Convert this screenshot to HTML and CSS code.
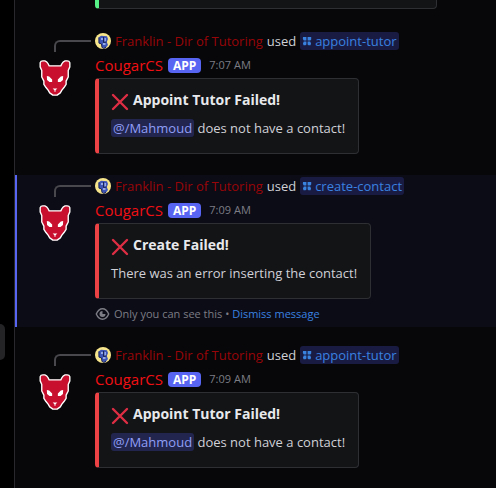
FILE: index.html
```
<!DOCTYPE html>
<html lang="en">
<head>
<meta charset="utf-8">
<title>CougarCS chat</title>
<link rel="stylesheet" href="styles.css">
</head>
<body>
<svg class="defs" aria-hidden="true">
  <symbol id="cougar" viewBox="0 0 30 34">
    <path d="M1 2.500Q1.500 .8 3.500 .8H5.500Q7.500 1.500 8.500 3.500L9.500 5.500H20.500L21.500 3.500Q22.500 1.500 24.500 .8H26.500Q28.500 .8 29 2.500V6.500L27.500 10V16L25.500 20V23L23.500 26L21.500 28.500L20 31L17 33.200H13L10 31L8.500 28.500L6.500 26L4.500 23V20L2.500 16V10L1 6.500Z" fill="#c8102e" stroke="#fff" stroke-width="1.300" stroke-linejoin="round"/>
    <path d="M7.300 15L9.500 15.500L12.300 18.500V20.800H9.800L7.500 18.800ZM22.700 15L20.500 15.500L17.700 18.500V20.800H20.200L22.500 18.800ZM12.800 27H17.200L15.500 28.500V30H14.500V28.500Z" fill="#fff"/>
  </symbol>
  <symbol id="user" viewBox="0 0 16 16">
    <circle cx="8" cy="8" r="8" fill="#f7e58c"/>
    <path d="M3.500 4.500L6 2.800L12 3.300L13 6L11.800 9L13 12L10.500 15.300L7 14.500L6.500 11L3.800 10.500Z" fill="#3e55b8"/>
    <path d="M6 5H8V7H6ZM9.500 5H11V8.500H9.500ZM8 10H10.500V12H8Z" fill="#93a8e6"/>
    <path d="M4 4.500V10L6.500 11L7 14.500L9 15.500L11 14M8.500 4V9.500L11.500 9" fill="none" stroke="#1c2455"/>
  </symbol>
  <symbol id="app" viewBox="0 0 10 10">
    <path d="M1 1H4.400V4.400H1.800Q.3 3.500 1 1ZM5.600 1H9.200V3.500L8.300 4.400H5.600ZM1.800 5.600H4.400V8.500L3.500 9.300H1.500Q.3 7.500 1.800 5.600ZM5.600 5.600H8.200Q9.700 7.500 8.500 9.300H6.500L5.600 8.500Z" fill="currentColor"/>
  </symbol>
  <symbol id="cross" viewBox="0 0 18 18">
    <path d="M2 2L16 16M16 2L2 16" fill="none" stroke="#dd2e44" stroke-width="2.400" stroke-linecap="round"/>
  </symbol>
  <symbol id="eye" viewBox="0 0 14 12">
    <path d="M.8 6Q3 .8 7 .8T13.200 6Q11 11.200 7 11.200T.8 6Z" fill="none" stroke="currentColor" stroke-width="1.400"/>
    <path d="M7 3V6H10A3 3 0 1 1 7 3Z" fill="currentColor"/>
  </symbol>
</svg>
<div class="app">
  <nav class="rail" aria-label="Servers"><span class="pill"></span></nav>
  <main class="chat">
    <div class="embed previous"></div>

    <article class="message">
      <div class="context">
        <svg class="user"><use href="#user"/></svg>
        <span class="invoker">Franklin - Dir of Tutoring</span>
        <span>used</span>
        <a class="command" href="#"><svg class="command-icon"><use href="#app"/></svg>appoint-tutor</a>
      </div>
      <svg class="avatar"><use href="#cougar"/></svg>
      <div class="body">
        <header class="author"><span class="name">CougarCS</span><span class="tag">APP</span><time>7:07 AM</time></header>
        <section class="embed">
          <h2><svg class="cross"><use href="#cross"/></svg>Appoint Tutor Failed!</h2>
          <p><span class="mention">@/Mahmoud</span> does not have a contact!</p>
        </section>
      </div>
    </article>

    <article class="message private">
      <div class="context">
        <svg class="user"><use href="#user"/></svg>
        <span class="invoker">Franklin - Dir of Tutoring</span>
        <span>used</span>
        <a class="command" href="#"><svg class="command-icon"><use href="#app"/></svg>create-contact</a>
      </div>
      <svg class="avatar"><use href="#cougar"/></svg>
      <div class="body">
        <header class="author"><span class="name">CougarCS</span><span class="tag">APP</span><time>7:09 AM</time></header>
        <section class="embed">
          <h2><svg class="cross"><use href="#cross"/></svg>Create Failed!</h2>
          <p>There was an error inserting the contact!</p>
        </section>
        <footer class="note"><svg class="eye"><use href="#eye"/></svg><span>Only you can see this • <a href="#">Dismiss message</a></span></footer>
      </div>
    </article>

    <article class="message">
      <div class="context">
        <svg class="user"><use href="#user"/></svg>
        <span class="invoker">Franklin - Dir of Tutoring</span>
        <span>used</span>
        <a class="command" href="#"><svg class="command-icon"><use href="#app"/></svg>appoint-tutor</a>
      </div>
      <svg class="avatar"><use href="#cougar"/></svg>
      <div class="body">
        <header class="author"><span class="name">CougarCS</span><span class="tag">APP</span><time>7:09 AM</time></header>
        <section class="embed">
          <h2><svg class="cross"><use href="#cross"/></svg>Appoint Tutor Failed!</h2>
          <p><span class="mention">@/Mahmoud</span> does not have a contact!</p>
        </section>
      </div>
    </article>
  </main>
</div>
</body>
</html>
```
FILE: styles.css
```
*, *::before { box-sizing: border-box; }

body {
  margin: 0;
  background: #000;
  color: #d0d1d6;
  font: 13px/18px "Open Sans", "Noto Sans", sans-serif;
}

a { color: #3a82e0; text-decoration: none; }

svg { display: block; flex: none; }

.defs { position: absolute; width: 0; height: 0; }

.app {
  display: grid;
  grid-template-columns: 14px 1fr;
  min-height: 100vh;
}

.rail {
  display: flex;
  align-items: flex-start;
  padding-top: 324px;
}

.pill {
  width: 5px;
  height: 36px;
  border-radius: 0 6px 6px 0;
  background: #242427;
}

.chat {
  border-left: 1px solid #29292d;
  background: #070709;
}

.message {
  display: grid;
  grid-template-columns: 80px 1fr;
  margin-bottom: 17px;
  padding: 2px 0 4px;
}

.private {
  background: #0c0c16;
  box-shadow: inset 2px 0 #5865f2;
}

.context {
  grid-column: 1 / -1;
  display: flex;
  align-items: center;
  gap: 4px;
  height: 18px;
  margin-bottom: 6px;
  white-space: nowrap;
}

.context::before {
  content: "";
  align-self: flex-end;
  width: 37px;
  height: 12px;
  margin: 0 0 -2px 39px;
  border: solid #48484d;
  border-width: 2px 0 0 2px;
  border-top-left-radius: 6px;
}

.user { width: 16px; height: 16px; }

.invoker { color: #980508; }

.command {
  display: flex;
  align-items: center;
  gap: 3px;
  padding: 0 2px;
  border-radius: 3px;
  background: #191b43;
}

.command-icon { width: 10px; height: 10px; }

.avatar {
  width: 32px;
  height: 36px;
  margin: 4px 0 0 24px;
}

.author {
  display: flex;
  align-items: center;
  height: 18px;
  margin-bottom: 4px;
}

.name { color: #f01014; font-size: 15px; }

.tag {
  margin: 0 8px 0 5px;
  padding: 0 5px;
  border-radius: 4px;
  background: #5865f2;
  color: #fff;
  font-size: 12px;
  font-weight: 700;
  line-height: 15px;
}

time { color: #7c7d85; font-size: 11px; }

.embed {
  width: fit-content;
  height: 76px;
  padding: 10px 13px 16px 12px;
  border: 1px solid #2e2f32;
  border-left: 4px solid #ed4245;
  border-radius: 4px;
  background: #131416;
}

.previous {
  width: 342px;
  height: 9px;
  margin: 0 0 21px 80px;
  padding: 0;
  border-top: 0;
  border-left-color: #57f287;
  border-radius: 0 0 4px 4px;
}

h2 {
  display: flex;
  align-items: flex-end;
  gap: 4px;
  margin: 0 0 8px;
  color: #e8e9ec;
  font-size: 14px;
  font-weight: 700;
  line-height: 22px;
}

.cross { width: 18px; height: 18px; }

p { margin: 0; }

.mention {
  padding: 0 2px;
  border-radius: 3px;
  background: #22264f;
  color: #919ef7;
}

.note {
  display: flex;
  align-items: center;
  gap: 4px;
  margin-top: 6px;
  color: #7c7d85;
  font-size: 11px;
}

.eye { width: 15px; height: 12px; }
```
